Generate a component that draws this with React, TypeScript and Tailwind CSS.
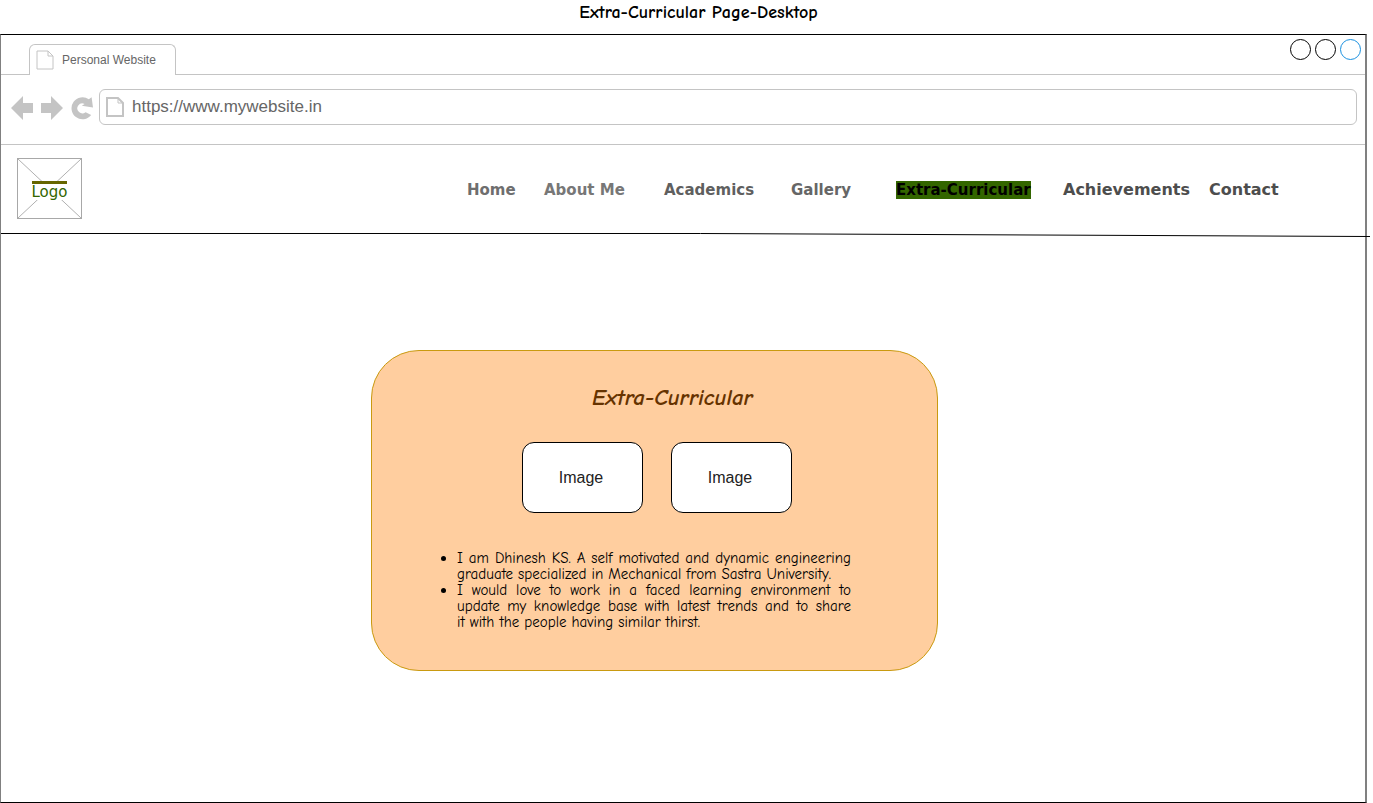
import type { ReactNode } from "react";

const comic =
  "font-['Comic_Sans_MS','Comic_Neue','Open_Sans',sans-serif]";

const navItems = [
  { label: "Home", style: "text-[15px] text-[#6e6e6e]" },
  { label: "About Me", style: "text-[15px] text-[#777777]" },
  { label: "Academics", style: "text-[15px] text-[#5f5f5f]" },
  { label: "Gallery", style: "text-[15px] text-[#666666]" },
  { label: "Extra-Curricular", style: "text-[15px] text-black bg-[#336600]", active: true },
  { label: "Achievements", style: "text-[16px] text-[#4d4d4d]" },
  { label: "Contact", style: "text-[16px] text-[#4d4d4d]" },
];

function PageIcon({ className, weight }: { className: string; weight: number }) {
  return (
    <svg viewBox="0 0 18 20" className={className} fill="none" stroke="#c4c4c4" strokeWidth={weight} aria-hidden="true">
      <path d="M1 1H12L17 6V19H1Z" />
      <path d="M12 1V6H17" strokeWidth="1" />
    </svg>
  );
}

function ToolButton({ label, children }: { label: string; children: ReactNode }) {
  return (
    <button type="button" aria-label={label} className="block shrink-0">
      {children}
    </button>
  );
}

function TitleBar() {
  return (
    <div className="flex h-10 items-end border-b border-[#c4c4c4]">
      <div className="-mb-px ml-7 flex h-[31px] w-[147px] items-center rounded-t-md border border-b-0 border-[#c4c4c4] bg-white pl-1.5">
        <PageIcon className="h-5 w-[18px]" weight={1} />
        <span className="ml-2 text-[12px] leading-4 text-[#666666]">Personal Website</span>
      </div>
      <div className="mr-1 mb-3.5 ml-auto flex gap-1">
        <button type="button" aria-label="Minimize" className="size-[21px] rounded-full border border-black" />
        <button type="button" aria-label="Maximize" className="size-[21px] rounded-full border border-black" />
        <button type="button" aria-label="Close" className="size-[21px] rounded-full border border-[#1890e0]" />
      </div>
    </div>
  );
}

function AddressBar() {
  return (
    <div className="flex h-[70px] items-center border-b border-[#c4c4c4] pr-2 pb-1.5 pl-2.5">
      <div className="flex gap-2 pt-0.5">
        <ToolButton label="Back">
          <svg viewBox="0 0 22 24" className="h-6 w-[22px]" fill="#c4c4c4">
            <path d="M0 12L12 0V7H22V17H12V24Z" />
          </svg>
        </ToolButton>
        <ToolButton label="Forward">
          <svg viewBox="0 0 22 24" className="h-6 w-[22px]" fill="#c4c4c4">
            <path d="M22 12L10 0V7H0V17H10V24Z" />
          </svg>
        </ToolButton>
        <ToolButton label="Reload">
          <svg viewBox="0 0 22 24" className="h-6 w-[22px]" fill="#c4c4c4">
            <path d="M20.6 1.2L22 11.6L10.8 9.8L13.6 7.9A5 5 0 1 0 14.6 16.2L20.2 19A11 11 0 1 1 17.8 3.2Z" />
          </svg>
        </ToolButton>
      </div>
      <div className="ml-1.5 flex h-9 flex-1 items-center rounded-md border border-[#c4c4c4] pl-1.5">
        <PageIcon className="h-5 w-[18px]" weight={2} />
        <input
          type="text"
          aria-label="Address"
          defaultValue="https://www.mywebsite.in"
          className="ml-2 h-6 min-w-0 flex-1 bg-transparent text-[17px] leading-6 text-[#666666] outline-none"
        />
      </div>
    </div>
  );
}

function Logo() {
  return (
    <a href="#home" className="relative mb-0.5 grid h-[61px] w-[65px] place-items-center border border-[#a8a8a8]">
      <svg viewBox="0 0 63 59" className="absolute inset-0 size-full" stroke="#b0b0b0" aria-hidden="true">
        <path d="M0 0L63 59M63 0L0 59" />
      </svg>
      <span className="relative mt-1 border-t-[3px] border-[#666600] bg-white font-['DejaVu_Sans',sans-serif] text-[15px] leading-4 text-[#336600]">
        Logo
      </span>
    </a>
  );
}

function SiteHeader() {
  return (
    <header className="flex h-[88px] items-center justify-between pl-4">
      <Logo />
      <nav aria-label="Main" className="pt-px">
        <ul className="grid grid-cols-[77px_120px_127px_105px_167px_146px_156px] items-center font-['DejaVu_Sans',sans-serif] font-bold">
          {navItems.map((item) => (
            <li key={item.label} className="flex">
              <a
                href={"#" + item.label.toLowerCase().replace(" ", "-")}
                aria-current={item.active ? "page" : undefined}
                className={"leading-[18px] whitespace-nowrap " + item.style}
              >
                {item.label}
              </a>
            </li>
          ))}
        </ul>
      </nav>
    </header>
  );
}

function ImageBox() {
  return (
    <div className="grid h-[71px] w-[121px] place-items-center rounded-xl border border-black bg-white pr-0.5 text-[16px] leading-5 text-[#222222]">
      Image
    </div>
  );
}

function ExtraCurricularCard() {
  return (
    <section className="mt-[113px] ml-[370px] w-[567px] rounded-[48px] border border-[#c99a10] bg-[#ffce9f] pt-[31px] pb-10">
      <h1 className={comic + " pl-9 text-center text-[23px] leading-8 font-bold text-[#663300] italic"}>
        Extra-Curricular
      </h1>
      <div className="mt-7 flex justify-center gap-7 pl-1">
        <ImageBox />
        <ImageBox />
      </div>
      <ul className={comic + " mt-[37px] mr-[86px] ml-[85px] list-disc text-justify text-[15px] leading-4 text-black"}>
        <li>I am Dhinesh KS. A self motivated and dynamic engineering graduate specialized in Mechanical from Sastra University.</li>
        <li>I would love to work in a faced learning environment to update my knowledge base with latest trends and to share it&nbsp;with the people having similar thirst.</li>
      </ul>
    </section>
  );
}

export default function App() {
  return (
    <div className="flex min-h-screen flex-col bg-white font-['Liberation_Sans',Arial,sans-serif]">
      <p className={comic + " h-[34px] pt-px pl-6 text-center text-[18px] leading-6 font-bold text-black"}>
        Extra-Curricular Page-Desktop
      </p>
      <div className="mr-1.5 flex flex-1 flex-col border-t border-r-2 border-b border-l border-t-black border-r-[#808080] border-b-black border-l-[#808080]">
        <TitleBar />
        <AddressBar />
        <SiteHeader />
        <svg viewBox="0 0 1370 4" preserveAspectRatio="none" className="-mr-[5px] block h-1 w-auto" stroke="black" aria-hidden="true">
          <path d="M0 0.5H700L1370 3.5" fill="none" />
        </svg>
        <main>
          <ExtraCurricularCard />
        </main>
      </div>
    </div>
  );
}
